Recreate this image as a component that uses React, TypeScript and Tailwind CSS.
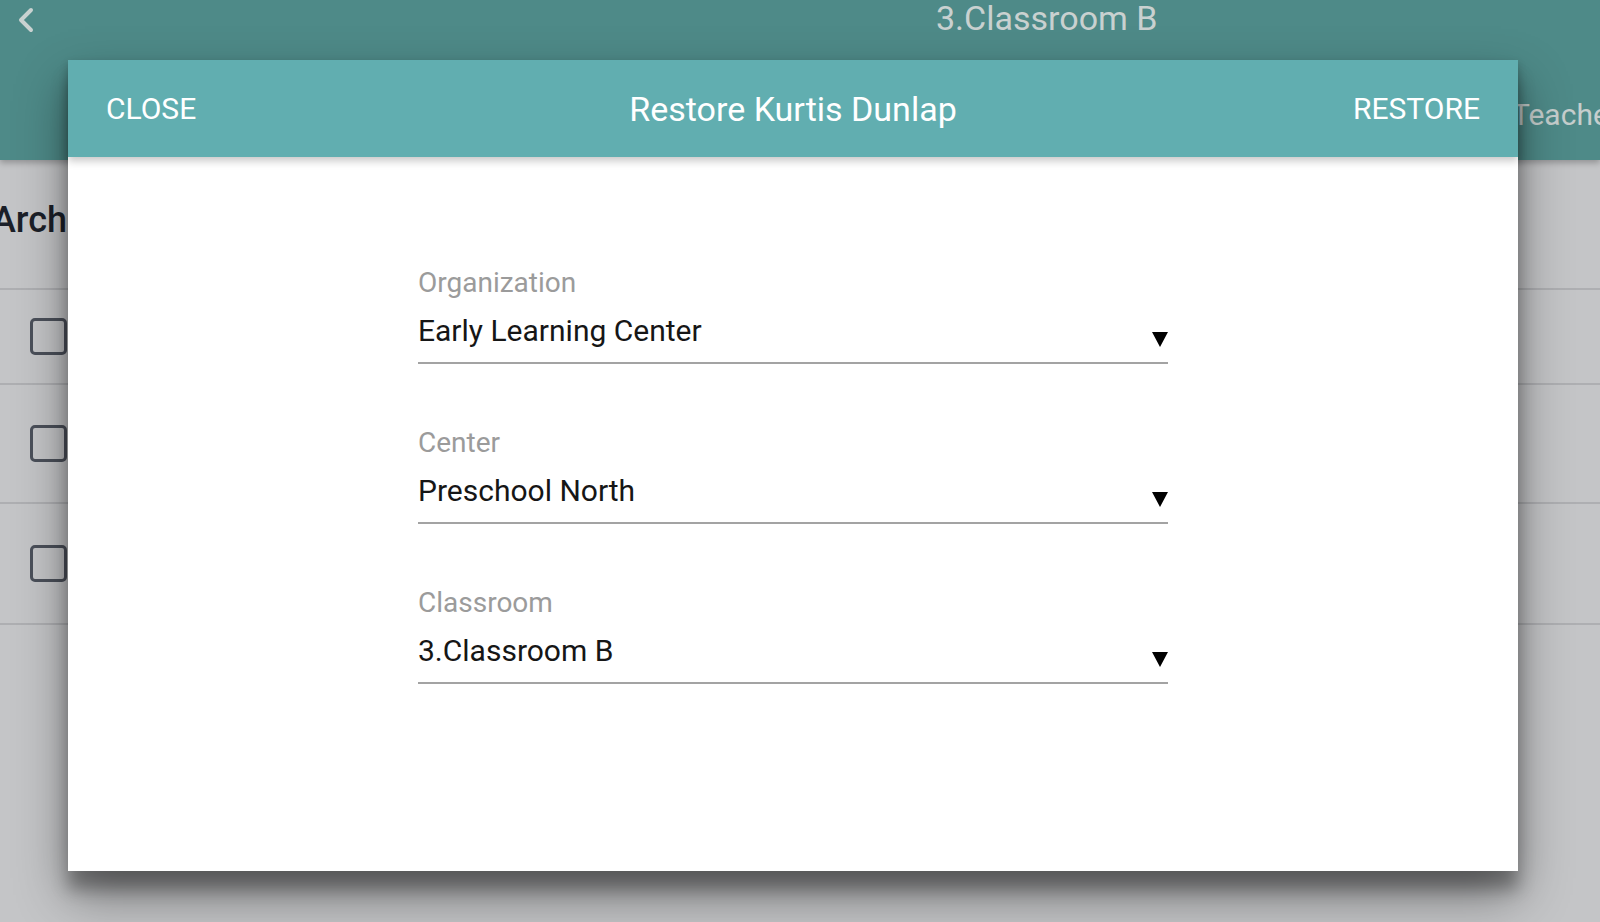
import React from "react";

type Field = {
  label: string;
  value: string;
};

const fields: Field[] = [
  { label: "Organization", value: "Early Learning Center" },
  { label: "Center", value: "Preschool North" },
  { label: "Classroom", value: "3.Classroom B" },
];

const rowHeights = ["h-[95px]", "h-[119px]", "h-[121px]"];

/* 下拉箭头 */
function Caret() {
  return (
    <svg width="16" height="15" viewBox="0 0 16 15" className="mb-[2px] shrink-0">
      <polygon points="0,0 16,0 8,15" fill="#000" />
    </svg>
  );
}

function SelectField({ field }: { field: Field }) {
  return (
    <div className="w-[750px]">
      <div className="text-[28px] leading-[32px] text-[#9b9b9b]">{field.label}</div>
      <div className="mt-[14px] flex items-end justify-between border-b-2 border-[#a3a3a3] pb-[13px]">
        <span className="text-[30px] leading-[36px] text-[#161616]">{field.value}</span>
        <Caret />
      </div>
    </div>
  );
}

export default function App() {
  return (
    <div className="relative h-[922px] w-[1600px] overflow-hidden bg-[#c4c5c7] font-['Roboto','Liberation_Sans',sans-serif]">
      {/* top bar */}
      <header className="h-[160px] bg-[#4e8a88] shadow-[0_3px_6px_rgba(0,0,0,0.25)]">
        <div className="flex h-[38px] items-center">
          <svg width="17" height="26" viewBox="0 0 17 26" className="ml-[17px] mt-[1px]">
            <polyline
              points="14,3 4,13 14,23"
              fill="none"
              stroke="#c9d2d1"
              strokeWidth="4"
              strokeLinecap="round"
              strokeLinejoin="round"
            />
          </svg>
          <span className="ml-[902px] mt-[-3px] whitespace-nowrap text-[34px] leading-[40px] text-[#c9d1d0]">
            3.Classroom B
          </span>
        </div>
        <div className="mt-[58px] flex whitespace-nowrap pl-[1512px] text-[30px] leading-[38px] text-[#c6cecd]">
          Teachers
        </div>
      </header>

      {/* page behind the dialog */}
      <main>
        <h1 className="ml-[-8px] pt-[39px] text-[36px] font-medium leading-[42px] text-[#1b1f28] whitespace-nowrap">
          Archived Children
        </h1>
        <div className="mt-[47px] border-t-2 border-[#aeafb2]">
          {rowHeights.map((h, i) => (
            <div key={i} className={`${h} flex items-center border-b-2 border-[#aeafb2] pl-[30px]`}>
              <div className="h-[37px] w-[37px] rounded-[5px] border-[3px] border-[#4b505a]" />
            </div>
          ))}
        </div>
      </main>

      {/* dialog */}
      <div className="absolute left-[68px] top-[60px] flex h-[811px] w-[1450px] flex-col bg-white shadow-[0_24px_48px_rgba(0,0,0,0.42),0_18px_16px_rgba(0,0,0,0.3)]">
        <div className="relative z-10 grid h-[97px] grid-cols-[1fr_auto_1fr] items-center bg-[#61aeb0] px-[38px] text-white shadow-[0_4px_8px_rgba(0,0,0,0.22)]">
          <button className="justify-self-start text-[30px] leading-[36px]">CLOSE</button>
          <span className="text-[34px] leading-[38px]">Restore Kurtis Dunlap</span>
          <button className="justify-self-end text-[30px] leading-[36px]">RESTORE</button>
        </div>
        <div className="flex flex-col items-center gap-[63px] pt-[110px]">
          {fields.map((f) => (
            <SelectField key={f.label} field={f} />
          ))}
        </div>
      </div>
    </div>
  );
}
